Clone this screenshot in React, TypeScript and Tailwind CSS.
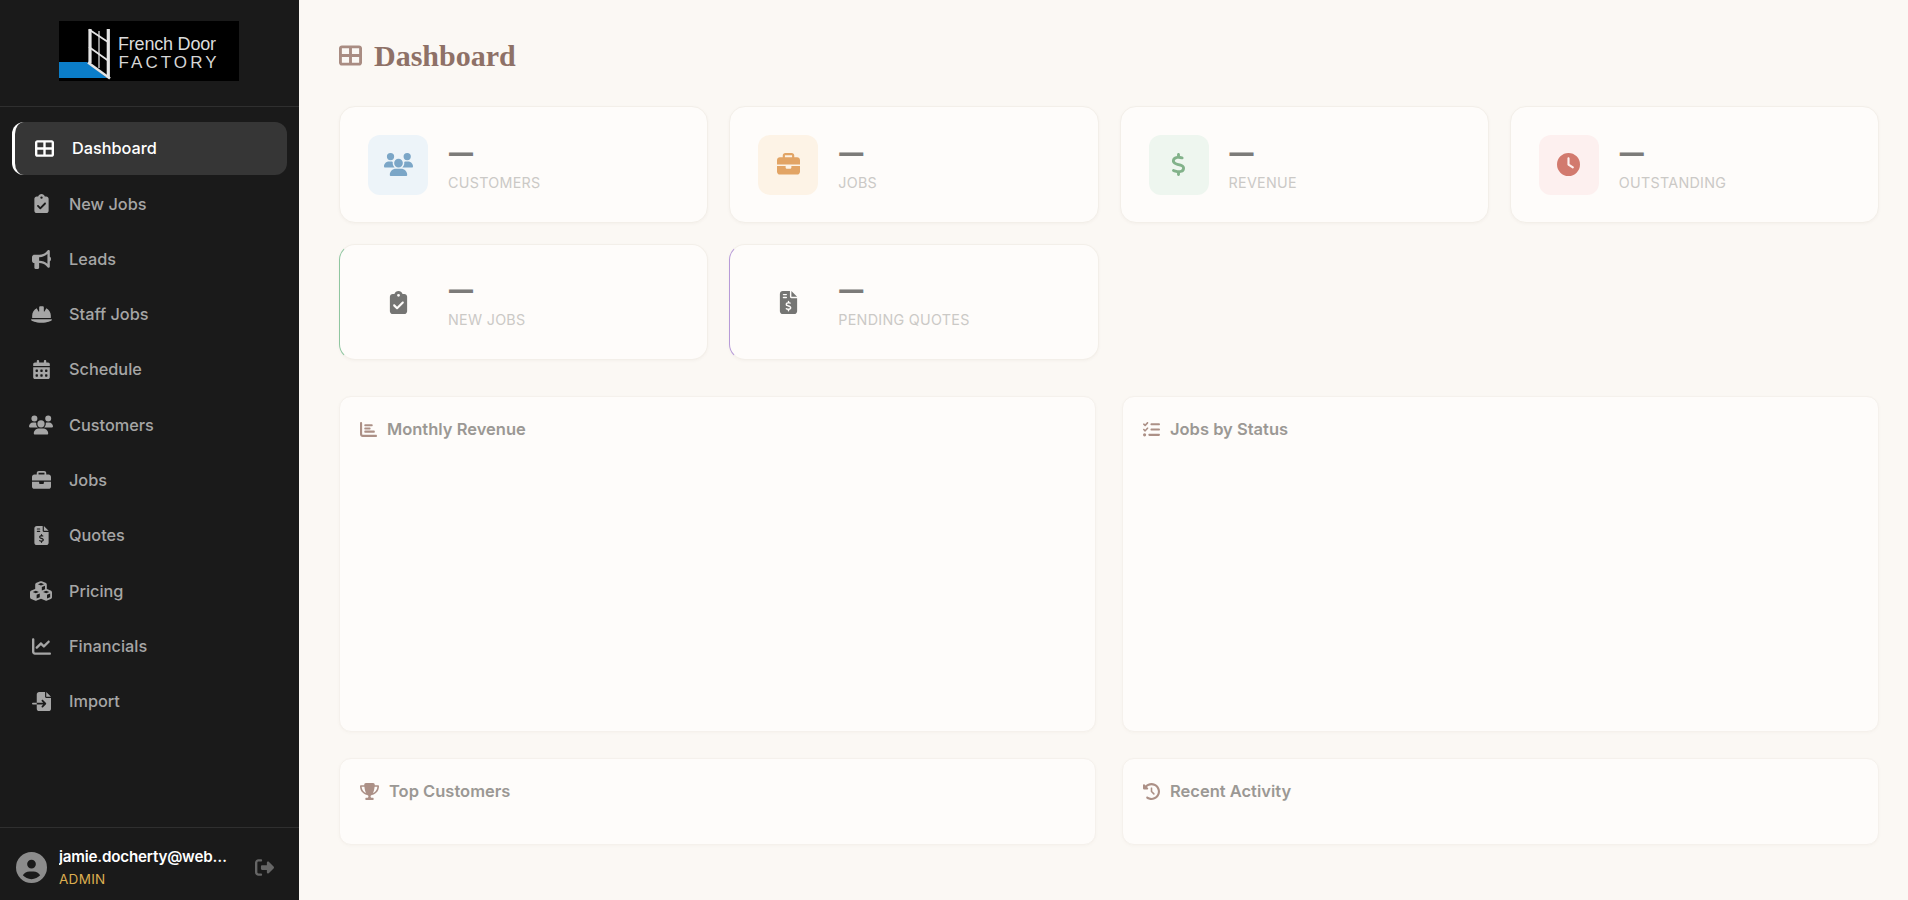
import type { ReactNode } from "react";
import type { IconType } from "react-icons";
import {
  FaBriefcase,
  FaBullhorn,
  FaCalendarDays,
  FaChartBar,
  FaChartLine,
  FaClipboardCheck,
  FaClock,
  FaClockRotateLeft,
  FaCircleUser,
  FaCubes,
  FaDollarSign,
  FaFileImport,
  FaFileInvoiceDollar,
  FaHelmetSafety,
  FaListCheck,
  FaRightFromBracket,
  FaTableCellsLarge,
  FaTrophy,
  FaUsers,
} from "react-icons/fa6";

const NAV: { label: string; icon: IconType; size?: number; active?: boolean }[] = [
  { label: "Dashboard", icon: FaTableCellsLarge, active: true },
  { label: "New Jobs", icon: FaClipboardCheck },
  { label: "Leads", icon: FaBullhorn },
  { label: "Staff Jobs", icon: FaHelmetSafety, size: 21 },
  { label: "Schedule", icon: FaCalendarDays },
  { label: "Customers", icon: FaUsers, size: 24 },
  { label: "Jobs", icon: FaBriefcase },
  { label: "Quotes", icon: FaFileInvoiceDollar },
  { label: "Pricing", icon: FaCubes, size: 22 },
  { label: "Financials", icon: FaChartLine },
  { label: "Import", icon: FaFileImport },
];

function Logo() {
  return (
    <svg width="180" height="60" viewBox="0 0 180 60" className="block">
      <rect width="180" height="60" fill="#000" />
      <polygon points="0,41 28,41 48,57 0,57" fill="#0b7dc8" />
      <g fill="none" stroke="#e4e4e4">
        <path d="M31 8v34M49.300 8v49" strokeWidth="3.200" />
        <path d="M40 10v37" strokeWidth="1.200" />
        <path d="M30 8.500 49 21M30 26 49 39.500" strokeWidth="1.800" />
        <path d="M29 41.500 51 57.500" strokeWidth="2.500" />
      </g>
      <text x="59" y="29" fill="#dcdcdc" fontSize="18" fontFamily="Liberation Sans, Arial, sans-serif" textLength="98">
        French Door
      </text>
      <text x="59.500" y="47.300" fill="#d6d6d6" fontSize="17" fontFamily="Liberation Sans, Arial, sans-serif" textLength="98">
        FACTORY
      </text>
    </svg>
  );
}

function Sidebar() {
  return (
    <aside className="flex h-full w-[299px] shrink-0 flex-col bg-[#1a1a1a]">
      <div className="flex h-[107px] shrink-0 justify-center border-b border-[#2f2f2f] pt-[21px] pr-[1px]">
        <Logo />
      </div>

      <nav className="flex flex-1 flex-col gap-[2.3px] px-3 pt-[15px]">
        {NAV.map(({ label, icon: Icon, size, active }) => (
          <a
            key={label}
            className={
              active
                ? "flex h-[53px] items-center gap-4 rounded-[12px] border-l-[3px] border-white bg-[#363636] pl-[17px] text-[16.300px] font-medium text-white"
                : "flex h-[53px] items-center gap-4 rounded-[12px] pl-[17px] text-[16.300px] font-medium text-[#a6a6a6]"
            }
          >
            <span className="flex w-6 justify-center">
              <Icon size={size ?? 19} />
            </span>
            {label}
          </a>
        ))}
      </nav>

      <div className="flex h-[73px] shrink-0 items-center border-t border-[#2f2f2f] pt-[7px] pl-4">
        <FaCircleUser size={31} className="shrink-0 text-[#8c8c8c]" />
        <div className="ml-3 w-[172px]">
          <div className="truncate text-[15.200px] leading-[22px] font-semibold tracking-[-0.2px] text-white">jamie.docherty@webdoors.co.uk</div>
          <div className="text-[13.500px] leading-[22px] tracking-[0.3px] text-[#dcae50]">ADMIN</div>
        </div>
        <FaRightFromBracket size={19} className="ml-6 text-[#666666]" />
      </div>
    </aside>
  );
}

function StatCard({
  icon: Icon,
  label,
  size,
  box,
  color,
  edge,
}: {
  icon: IconType;
  label: string;
  size?: number;
  box?: string;
  color: string;
  edge?: string;
}) {
  return (
    <div className={`flex items-center gap-5 rounded-[16px] border border-[#f3efe9] bg-[#fefcfa] px-7 shadow-[0_1px_3px_rgba(120,100,80,0.05)] ${edge ?? ""}`}>
      <div className={`flex size-[60px] shrink-0 items-center justify-center rounded-[12px] ${box ?? ""} ${color}`}>
        <Icon size={size ?? 23} />
      </div>
      <div>
        <div className="h-[36px] pl-[1px] text-[24px] leading-[36px] font-black text-[#7c7b79]">—</div>
        <div className="text-[14.300px] leading-[24px] tracking-[0.3px] text-[#cbc9c6]">{label}</div>
      </div>
    </div>
  );
}

function Panel({ icon: Icon, title, iconSize, children }: { icon: IconType; title: string; iconSize: number; children?: ReactNode }) {
  return (
    <section className="rounded-[12px] border border-[#f5f1ec] bg-[#fefcfa] px-5 pt-[20px] shadow-[0_1px_3px_rgba(120,100,80,0.04)]">
      <h3 className="flex h-[24px] items-center gap-[10px] text-[16.500px] font-semibold text-[#9b9894]">
        <Icon size={iconSize} className="shrink-0 text-[#ac9086]" />
        {title}
      </h3>
      {children}
    </section>
  );
}

export default function App() {
  return (
    <div className="flex h-screen w-full overflow-hidden bg-[#fbf8f4] font-['Inter',sans-serif]">
      <Sidebar />

      <main className="min-w-0 flex-1 pt-[36px] pr-[29px] pl-[40px]">
        <h1 className="flex h-[38px] items-center gap-3 font-['Liberation_Serif',serif] text-[30px] font-bold text-[#8e7167]">
          <FaTableCellsLarge size={23} className="text-[#a98c82]" />
          Dashboard
        </h1>

        <div className="mt-[32px] grid grid-cols-4 grid-rows-[117px_116px] gap-x-[21px] gap-y-[21px]">
          <StatCard icon={FaUsers} size={29} label="CUSTOMERS" box="bg-[#edf4f9]" color="text-[#7ba6c7]" />
          <StatCard icon={FaBriefcase} label="JOBS" box="bg-[#fdf3e6]" color="text-[#e2a465]" />
          <StatCard icon={FaDollarSign} label="REVENUE" box="bg-[#eef6ef]" color="text-[#82b28a]" />
          <StatCard icon={FaClock} label="OUTSTANDING" box="bg-[#fdf0ef]" color="text-[#d27a6e]" />
          <StatCard icon={FaClipboardCheck} label="NEW JOBS" color="text-[#757573]" edge="border-l-[#8fc6a0]" />
          <StatCard icon={FaFileInvoiceDollar} label="PENDING QUOTES" color="text-[#757573]" edge="border-l-[#b79bd8]" />
        </div>

        <div className="mt-[36px] grid grid-cols-2 grid-rows-[336px_87px] gap-[26px]">
          <Panel icon={FaChartBar} iconSize={17} title="Monthly Revenue" />
          <Panel icon={FaListCheck} iconSize={17} title="Jobs by Status" />
          <Panel icon={FaTrophy} iconSize={19} title="Top Customers" />
          <Panel icon={FaClockRotateLeft} iconSize={17} title="Recent Activity" />
        </div>
      </main>
    </div>
  );
}
